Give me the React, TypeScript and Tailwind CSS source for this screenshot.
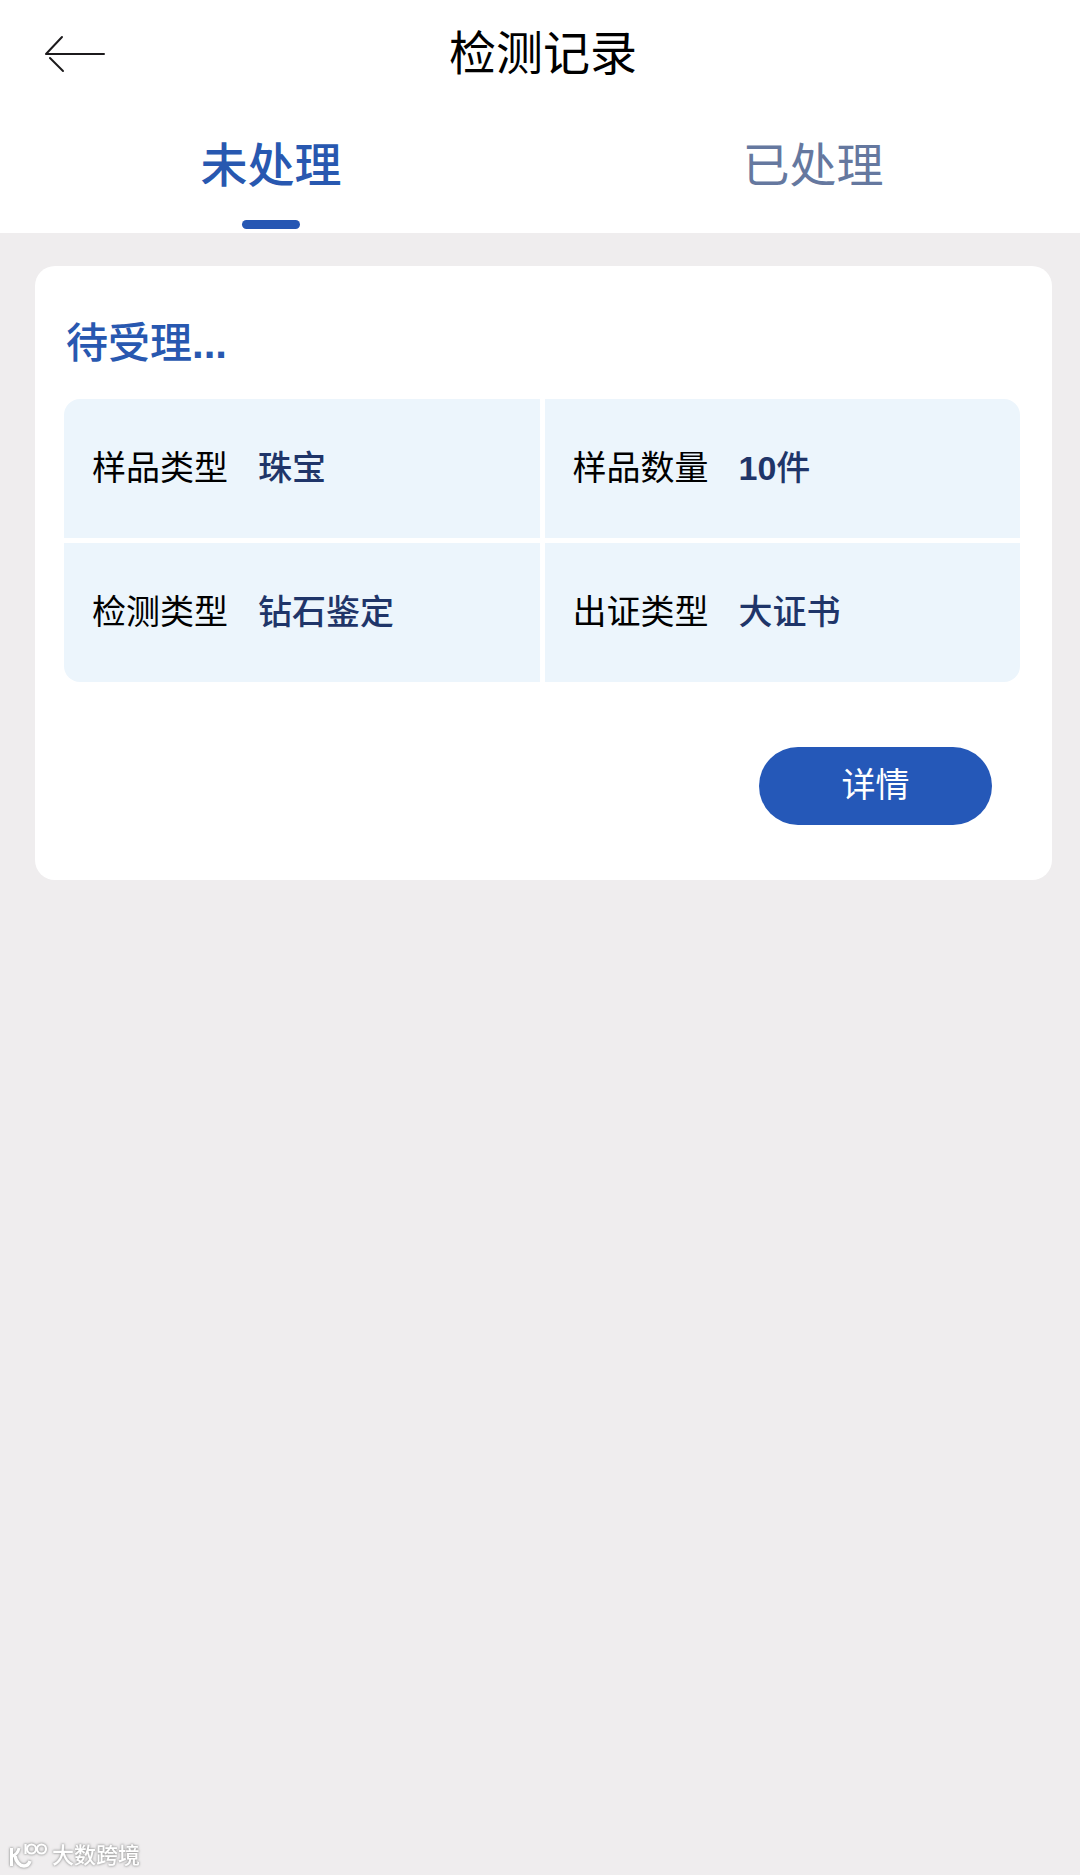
import { useState } from "react";

const fields = [
  { label: "样品类型", value: "珠宝" },
  { label: "样品数量", count: 10, value: "件" },
  { label: "检测类型", value: "钻石鉴定" },
  { label: "出证类型", value: "大证书" },
];

const tabs = ["未处理", "已处理"];

function BackArrow() {
  return (
    <svg width="64" height="40" viewBox="0 0 64 40" fill="none" stroke="#1c1a1c" strokeWidth="2" strokeLinecap="round" aria-hidden="true">
      <path d="M18 3 L2 20 H60" strokeLinejoin="round" />
      <path d="M6 24 L19 37" />
    </svg>
  );
}

function Watermark() {
  return (
    <footer className="flex items-center gap-1 pb-[5px] pl-2 text-[22px] leading-7 font-medium text-white [filter:drop-shadow(0_0_1px_#a0a0a0)_drop-shadow(0_0_1px_#b8b8b8)]">
      <svg width="40" height="28" viewBox="0 0 40 28" fill="none" stroke="#fff" aria-hidden="true">
        <path d="M3.500 6 V24" strokeWidth="3" />
        <path d="M11 6 C10 11 8 13 4 14" strokeWidth="3" />
        <path d="M7 14 C8 20 12 24 16 24 C19 24 21 22 22 19" strokeWidth="3.500" />
        <path d="M17.500 2 V12" strokeWidth="2.200" />
        <circle cx="23.500" cy="7" r="4.500" strokeWidth="2.200" />
        <circle cx="33.500" cy="7" r="4.500" strokeWidth="2.200" />
      </svg>
      <span>大数跨境</span>
    </footer>
  );
}

export default function App() {
  const [active, setActive] = useState(0);

  return (
    <div className="flex min-h-screen flex-col bg-[#efedee] font-['Liberation_Sans','Noto_Sans_CJK_SC',sans-serif] text-black">
      <header className="bg-white">
        <div className="grid grid-cols-[1fr_auto_1fr] items-center pt-5 pr-[38px] pl-11">
          <button type="button" aria-label="返回" className="justify-self-start">
            <BackArrow />
          </button>
          <h1 className="text-[47px] leading-[68px]">检测记录</h1>
        </div>
        <div role="tablist" className="grid grid-cols-2 gap-2 pt-11 pl-1">
          {tabs.map((tab, i) => (
            <button
              key={tab}
              type="button"
              role="tab"
              aria-selected={active === i}
              onClick={() => setActive(i)}
              className={
                "flex flex-col items-center gap-5 pb-1 text-[47px] leading-[68px] " +
                (active === i ? "font-medium text-[#2858b0]" : "text-[#65789f]")
              }
            >
              {tab}
              <span className={"h-[9px] w-[58px] rounded-full " + (active === i ? "bg-[#2657b3]" : "bg-transparent")} />
            </button>
          ))}
        </div>
      </header>

      <main className="flex-1 pt-[33px] pr-7 pl-[35px]">
        <section className="rounded-[20px] bg-white pt-12 pr-8 pb-[55px] pl-[29px]">
          <h2 className="pl-[2px] text-[42px] leading-[60px] font-medium text-[#2858b0]">
            待受理<span className="font-bold">...</span>
          </h2>
          <dl className="mt-[25px] grid grid-cols-2 gap-[5px] overflow-hidden rounded-2xl text-[34px] leading-[49px]">
            {fields.map(({ label, count, value }) => (
              <div key={label} className="flex gap-[30px] bg-[#ecf5fc] px-7 py-[45px]">
                <dt>{label}</dt>
                <dd className="font-medium text-[#1f3569]">
                  {count !== undefined && <span className="font-bold">{count}</span>}
                  {value}
                </dd>
              </div>
            ))}
          </dl>
          <div className="mt-[65px] flex justify-end pr-7">
            <button type="button" className="w-[233px] rounded-full bg-[#2558b8] pt-[14px] pb-[15px] text-[34px] leading-[49px] text-white">
              详情
            </button>
          </div>
        </section>
      </main>
      <Watermark />
    </div>
  );
}
